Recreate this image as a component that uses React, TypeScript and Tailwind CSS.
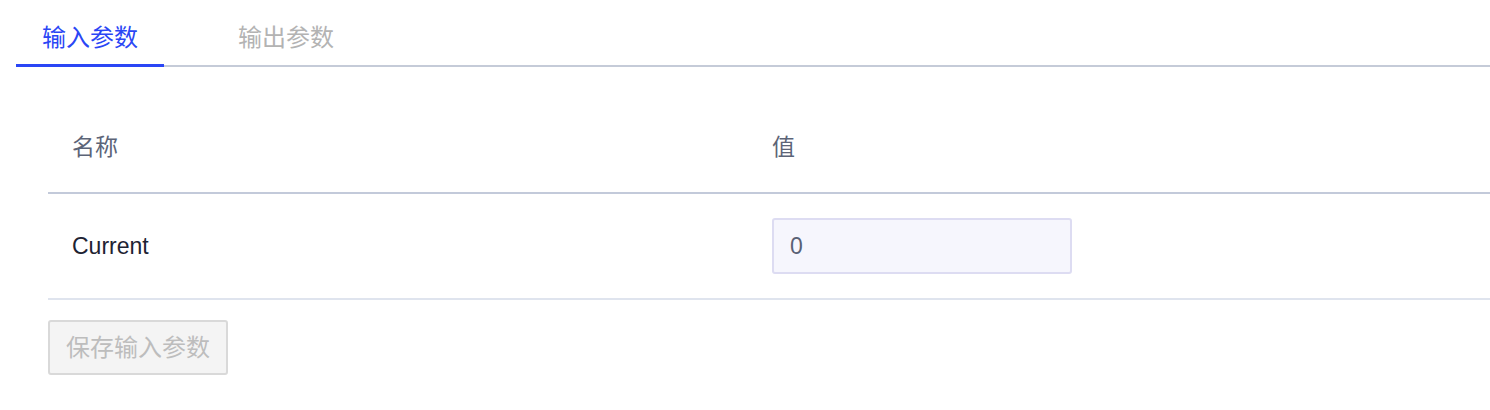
import React, { useState } from "react";

type Param = {
  name: string;
  value: string;
};

const tabs = ["输入参数", "输出参数"];

const App: React.FC = () => {
  const [active, setActive] = useState(0);
  const [params, setParams] = useState<Param[]>([{ name: "Current", value: "0" }]);

  return (
    <div
      className="w-[1490px] h-[410px] bg-white pl-4"
      style={{ fontFamily: '"Liberation Sans", "Noto Sans CJK SC", sans-serif' }}
    >
      <div className="flex gap-12 border-b-2 border-[#c5cbd8]">
        {tabs.map((t, i) => (
          <button
            key={t}
            onClick={() => setActive(i)}
            className={
              i === active
                ? "w-[148px] pt-[22px] pb-[10px] mb-[-2px] border-b-[3px] border-[#2a46f5] text-[24px] leading-[32px] text-[#2a46f5] text-center"
                : "w-[148px] pt-[22px] pb-[10px] mb-[-2px] border-b-[3px] border-transparent text-[24px] leading-[32px] text-[#b3b3b3] text-center"
            }
          >
            {t}
          </button>
        ))}
      </div>

      <div className="pl-8 pt-[35px]">
        <div className="grid grid-cols-[700px_1fr] h-[92px] items-center border-b-2 border-[#c3cada] text-[23px] text-[#5c6477]">
          <div className="px-6">名称</div>
          <div className="px-6">值</div>
        </div>
        {params.map((p, idx) => (
          <div
            key={p.name}
            className="grid grid-cols-[700px_1fr] h-[106px] items-center border-b-2 border-[#dfe4ee] text-[23px] text-[#1e2333]"
          >
            <div className="px-6">{p.name}</div>
            <div className="px-6">
              <input
                type="text"
                value={p.value}
                onChange={({ target }) =>
                  setParams(params.map((q, j) => (j === idx ? { ...q, value: target.value } : q)))
                }
                className="w-[300px] h-[56px] rounded-[3px] border-2 border-[#dddcf2] bg-[#f6f6fd] px-4 text-[23px] text-[#596175] outline-none"
              />
            </div>
          </div>
        ))}
        <button
          disabled
          className="mt-5 w-[180px] h-[55px] rounded-[3px] border-2 border-[#d9d9d9] bg-[#f4f4f4] text-[24px] text-[#bdbdbd]"
        >
          保存输入参数
        </button>
      </div>
    </div>
  );
};

export default App;
